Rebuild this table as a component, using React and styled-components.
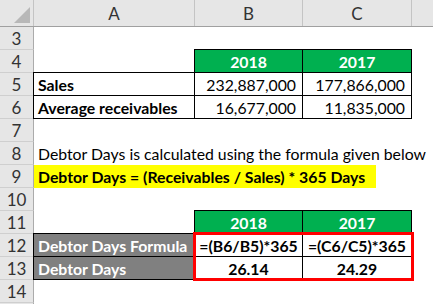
import React from 'react';
import styled, { createGlobalStyle } from 'styled-components';

const COLS = '34px 161px 108px 109px 1fr';

const GlobalStyle = createGlobalStyle`
  body {
    margin: 0;
    background: #fff;
  }
`;

const Sheet = styled.div`
  width: 433px;
  height: 304px;
  overflow: hidden;
  background: #fff;
  font-family: Lato, 'Liberation Sans', sans-serif;
  font-size: 15.8px;
  color: #000;
`;

const HeaderRow = styled.div`
  display: grid;
  grid-template-columns: ${COLS};
  height: 27px;
  box-sizing: border-box;
  background: #e6e6e6;
  border-bottom: 1px solid #a0a0a0;
  font-size: 17px;
`;

const Corner = styled.div`
  display: flex;
  align-items: flex-end;
  justify-content: flex-end;
  padding: 0 3px 3px 0;
  border-right: 1px solid #c4c4c4;
`;

const HeadCell = styled.div`
  display: flex;
  align-items: center;
  justify-content: center;
  color: #333;
  border-right: 1px solid ${({ $last }) => ($last ? 'transparent' : '#c4c4c4')};
`;

const Row = styled.div`
  display: grid;
  grid-template-columns: ${COLS};
  height: 23px;
`;

const RowNum = styled.div`
  display: flex;
  align-items: center;
  justify-content: center;
  box-sizing: border-box;
  background: #e6e6e6;
  color: #333;
  font-size: 17px;
  border-right: 1px solid #ababab;
  border-bottom: 1px solid #cfcfcf;
`;

const edgeShadow = {
  top: '0 -1px 0 #000',
  left: '-1px 0 0 #000',
  topleft: '0 -1px 0 #000, -1px 0 0 #000, -1px -1px 0 #000',
};

const Cell = styled.div`
  display: flex;
  align-items: center;
  box-sizing: border-box;
  padding: 0 ${({ $align }) => ($align === 'right' ? '6px' : '4px')};
  justify-content: ${({ $align }) =>
    $align === 'right' ? 'flex-end' : $align === 'center' ? 'center' : 'flex-start'};
  background: ${({ $bg }) => $bg || 'transparent'};
  color: ${({ $color }) => $color || '#000'};
  font-weight: ${({ $bold }) => ($bold ? 700 : 400)};
  white-space: nowrap;
  grid-column: ${({ $span }) => $span || 'auto'};
  border-right: ${({ $box }) => ($box ? '1px solid #000' : 'none')};
  border-bottom: ${({ $box }) => ($box ? '1px solid #000' : 'none')};
  box-shadow: ${({ $edge }) => (edgeShadow[$edge] ? edgeShadow[$edge] : 'none')};
`;

const HighlightCell = styled.div`
  grid-column: 2 / -1;
  display: flex;
`;

const Highlight = styled.span`
  display: flex;
  align-items: center;
  height: 23px;
  padding: 0 11px 0 4px;
  background: #ffff00;
  font-weight: 700;
  white-space: nowrap;
`;

const Block = styled.div`
  position: relative;
`;

const RedFrame = styled.div`
  position: absolute;
  left: 193px;
  top: -2px;
  width: 221px;
  height: 49px;
  box-sizing: border-box;
  border: 3px solid #ff0000;
  pointer-events: none;
`;

const Empty = () => (
  <>
    <Cell />
    <Cell />
    <Cell />
    <Cell />
  </>
);

const GREEN = '#00b050';
const GRAY = '#808080';

const App = () => (
  <Sheet>
    <GlobalStyle />
    <HeaderRow>
      <Corner>
        <svg width="16" height="16" viewBox="0 0 16 16">
          <polygon points="16,0 16,16 0,16" fill="#b8b8b8" />
        </svg>
      </Corner>
      <HeadCell>A</HeadCell>
      <HeadCell>B</HeadCell>
      <HeadCell>C</HeadCell>
      <HeadCell $last />
    </HeaderRow>

    <Row>
      <RowNum>3</RowNum>
      <Empty />
    </Row>
    <Row>
      <RowNum>4</RowNum>
      <Cell />
      <Cell $bg={GREEN} $color="#fff" $bold $align="center" $box $edge="topleft">2018</Cell>
      <Cell $bg={GREEN} $color="#fff" $bold $align="center" $box $edge="top">2017</Cell>
      <Cell />
    </Row>
    <Row>
      <RowNum>5</RowNum>
      <Cell $bold $box $edge="topleft">Sales</Cell>
      <Cell $align="right" $box>232,887,000</Cell>
      <Cell $align="right" $box>177,866,000</Cell>
      <Cell />
    </Row>
    <Row>
      <RowNum>6</RowNum>
      <Cell $bold $box $edge="left">Average receivables</Cell>
      <Cell $align="right" $box>16,677,000</Cell>
      <Cell $align="right" $box>11,835,000</Cell>
      <Cell />
    </Row>
    <Row>
      <RowNum>7</RowNum>
      <Empty />
    </Row>
    <Row>
      <RowNum>8</RowNum>
      <Cell $span="2 / -1">Debtor Days is calculated using the formula given below</Cell>
    </Row>
    <Row>
      <RowNum>9</RowNum>
      <HighlightCell>
        <Highlight>Debtor Days = (Receivables / Sales) * 365 Days</Highlight>
      </HighlightCell>
    </Row>
    <Row>
      <RowNum>10</RowNum>
      <Empty />
    </Row>
    <Row>
      <RowNum>11</RowNum>
      <Cell />
      <Cell $bg={GREEN} $color="#fff" $bold $align="center" $box $edge="topleft">2018</Cell>
      <Cell $bg={GREEN} $color="#fff" $bold $align="center" $box $edge="top">2017</Cell>
      <Cell />
    </Row>
    <Block>
      <Row>
        <RowNum>12</RowNum>
        <Cell $bg={GRAY} $color="#fff" $bold $box $edge="topleft">Debtor Days Formula</Cell>
        <Cell $bold $align="center" $box>=(B6/B5)*365</Cell>
        <Cell $bold $align="center" $box>=(C6/C5)*365</Cell>
        <Cell />
      </Row>
      <Row>
        <RowNum>13</RowNum>
        <Cell $bg={GRAY} $color="#fff" $bold $box $edge="left">Debtor Days</Cell>
        <Cell $bold $align="center" $box>26.14</Cell>
        <Cell $bold $align="center" $box>24.29</Cell>
        <Cell />
      </Row>
      <RedFrame />
    </Block>
    <Row>
      <RowNum>14</RowNum>
      <Empty />
    </Row>
    <Row>
      <RowNum />
      <Empty />
    </Row>
  </Sheet>
);

export default App;
